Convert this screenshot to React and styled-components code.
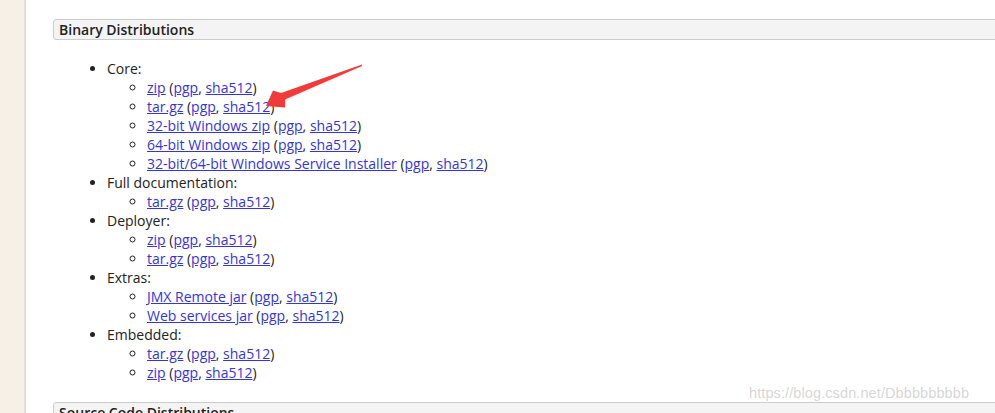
import React from "react";
import styled, { createGlobalStyle } from "styled-components";

const Global = createGlobalStyle`
  html, body { margin: 0; padding: 0; background: #fff; overflow: hidden; }
  body { font-family: "Open Sans", "Liberation Sans", sans-serif; font-size: 14px; color: #222; }
`;

const Page = styled.div`
  position: relative;
  display: flex;
  width: 995px;
  height: 413px;
  overflow: hidden;
`;

const Sidebar = styled.div`
  flex: 0 0 24px;
  background: #f6f0e6;
  border-right: 2px solid #e4dfd6;
`;

const Main = styled.div`
  flex: 1;
  padding: 19px 0 0 27px;
  margin-right: -30px;
`;

const SectionHeader = styled.h3`
  margin: 0;
  height: 19px;
  line-height: 19px;
  padding: 0 0 0 5px;
  background: #f4f4f4;
  border: 1px solid #cccccc;
  border-radius: 3px;
  font-size: 14px;
  font-weight: 600;
  color: #222;
`;

const OuterList = styled.ul`
  margin: 19px 0 20px 0;
  padding-left: 54px;
  list-style: disc;
  line-height: 19px;
`;

const InnerList = styled.ul`
  margin: 0;
  padding-left: 40px;
  list-style: circle;
`;

const Link = styled.a`
  color: #3434e0;
  text-decoration: underline;
`;

const Watermark = styled.div`
  position: absolute;
  left: 749px;
  top: 385px;
  font-family: "Liberation Sans", Arial, sans-serif;
  font-size: 14.5px;
  color: rgba(210, 210, 210, 0.9);
  letter-spacing: 0.1px;
`;

const Arrow = styled.svg`
  position: absolute;
  left: 0;
  top: 0;
  pointer-events: none;
`;

const Item = ({ label, href = "#" }) => (
  <li>
    <Link href={href}>{label}</Link> (<Link href="#">pgp</Link>, <Link href="#">sha512</Link>)
  </li>
);

const groups = [
  { name: "Core:", items: ["zip", "tar.gz", "32-bit Windows zip", "64-bit Windows zip", "32-bit/64-bit Windows Service Installer"] },
  { name: "Full documentation:", items: ["tar.gz"] },
  { name: "Deployer:", items: ["zip", "tar.gz"] },
  { name: "Extras:", items: ["JMX Remote jar", "Web services jar"] },
  { name: "Embedded:", items: ["tar.gz", "zip"] },
];

export default function App() {
  return (
    <>
      <Global />
      <Page>
        <Sidebar />
        <Main>
          <SectionHeader>Binary Distributions</SectionHeader>
          <OuterList>
            {groups.map((g) => (
              <li key={g.name}>
                {g.name}
                <InnerList>
                  {g.items.map((it) => (
                    <Item key={it} label={it} />
                  ))}
                </InnerList>
              </li>
            ))}
          </OuterList>
          <SectionHeader>Source Code Distributions</SectionHeader>
        </Main>
        <Arrow width="995" height="413" viewBox="0 0 995 413">
          <polygon
            points="362,64.5 281,93 273,90.5 266,106 285,107.5 285,99.5 362,66"
            fill="#f23a3a"
          />
        </Arrow>
        <Watermark>https://blog.csdn.net/Dbbbbbbbbb</Watermark>
      </Page>
    </>
  );
}
